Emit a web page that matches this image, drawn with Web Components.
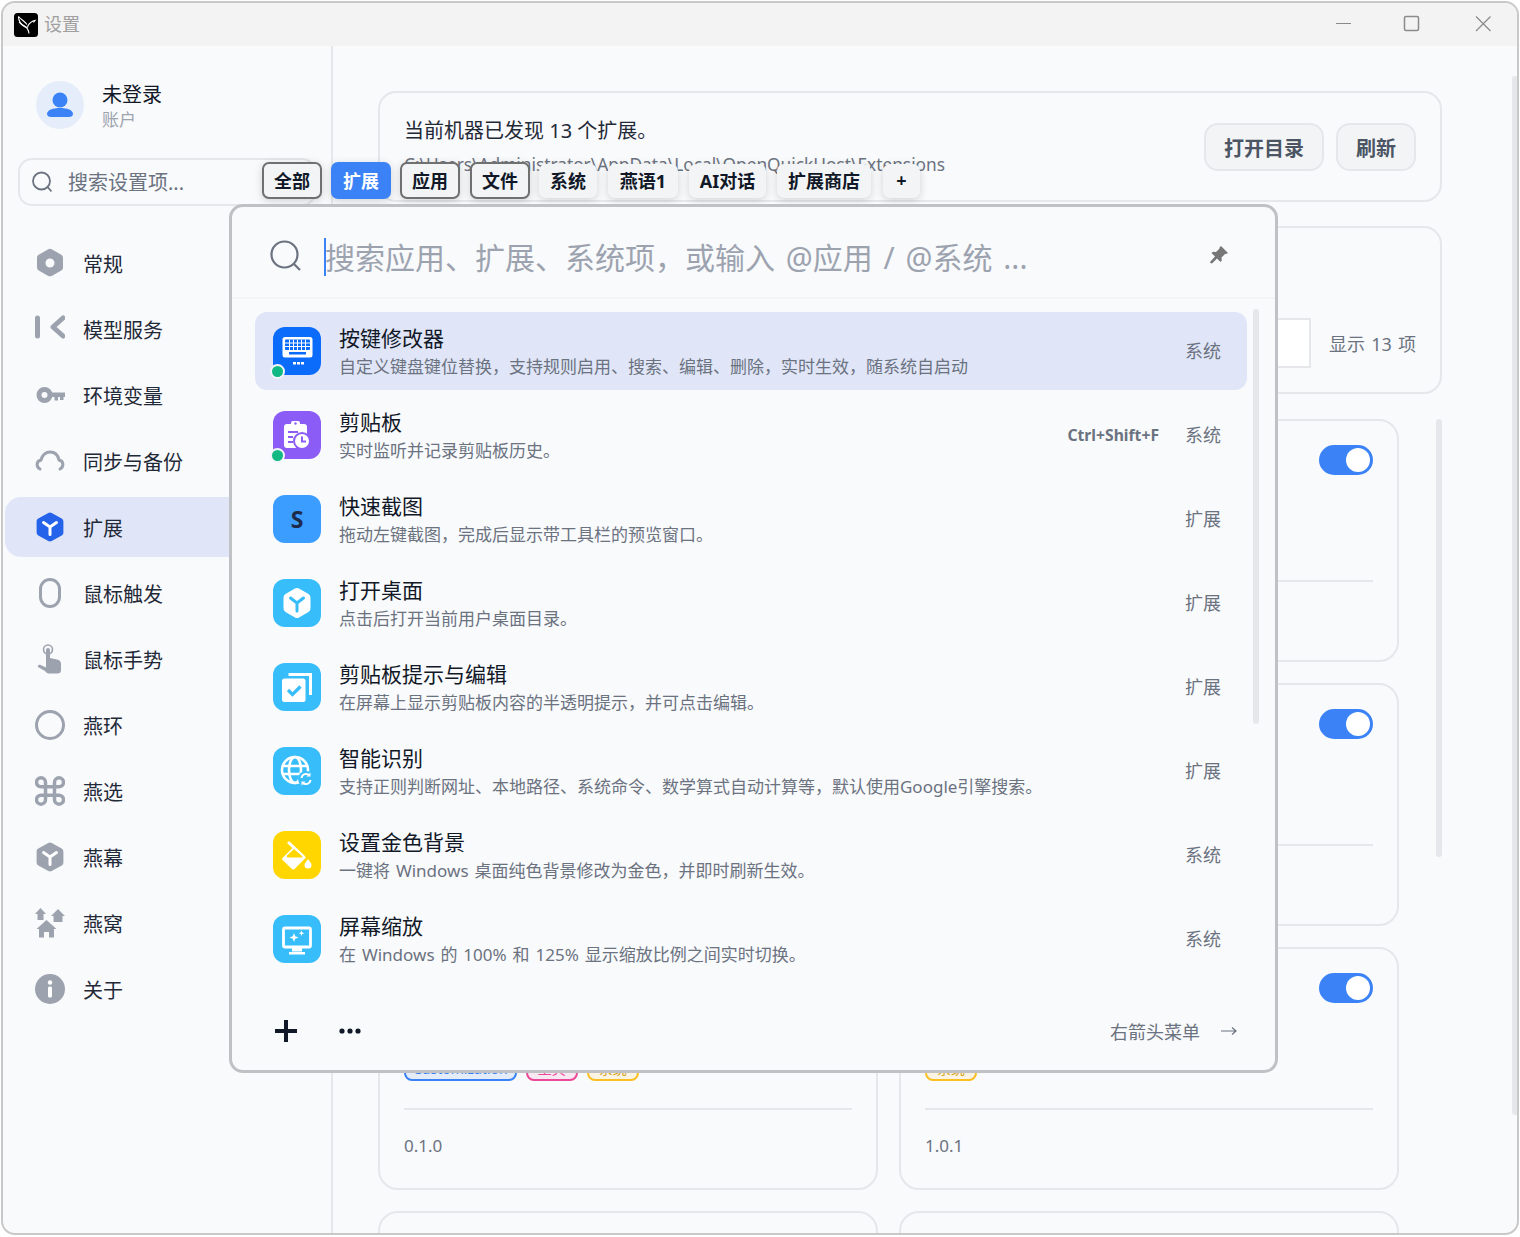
<!DOCTYPE html>
<html lang="zh-CN">
<head>
<meta charset="utf-8">
<title>设置</title>
<style>
  html, body { margin: 0; background: #fff; }
  body { padding: 1px; font-family: "Noto Sans", "Noto Sans CJK SC", sans-serif; color: #1f2937; }
</style>
</head>
<body>
<app-window>
  <title-bar slot="top"></title-bar>
  <side-nav slot="side">
    <nav-item label="常规"><svg viewBox="0 0 30 30"><path fill="#9ca3af" fill-rule="evenodd" d="M13.3 1.2a3.5 3.5 0 0 1 3.4 0l9.6 5.5a3.4 3.4 0 0 1 1.7 3v9.8c0 1.200-.6 2.400-1.700 3l-9.600 5.400a3.500 3.500 0 0 1-3.400 0l-9.600-5.400a3.400 3.400 0 0 1-1.700-3V9.700c0-1.200.6-2.400 1.700-3zM15 10.500a4.500 4.500 0 1 0 0 9 4.500 4.500 0 0 0 0-9z"/></svg></nav-item>
    <nav-item label="模型服务"><svg viewBox="0 0 30 30"><path fill="none" stroke="#9ca3af" stroke-width="5" stroke-linecap="round" stroke-linejoin="round" d="M2.500 4v18M28 4l-10 9 10 9"/></svg></nav-item>
    <nav-item label="环境变量"><svg viewBox="0 0 30 30"><circle cx="9.500" cy="15" r="5.500" fill="none" stroke="#9ca3af" stroke-width="5"/><path fill="#9ca3af" d="M14 12.500h16v4.500h-1.500v3h-3.500v-3h-2v3.500h-3.500V17H14z"/></svg></nav-item>
    <nav-item label="同步与备份"><svg viewBox="0 0 30 30"><path fill="none" stroke="#9ca3af" stroke-width="3" stroke-linecap="round" d="M5 23C1 21 1 15 6 14c1-5 5-8 9-8 5 0 8 3 9 8 5 1 5 7 1 9"/></svg></nav-item>
    <nav-item label="扩展" active><svg viewBox="0 0 30 30"><path fill="#2563eb" d="M13.300 1a3.500 3.500 0 0 1 3.400 0l10 5.600a3.400 3.400 0 0 1 1.700 3v10.800c0 1.200-.6 2.400-1.700 3L16.700 29a3.500 3.500 0 0 1-3.400 0l-10-5.600a3.400 3.400 0 0 1-1.700-3V9.600c0-1.200.6-2.400 1.700-3z"/><path fill="none" stroke="#fff" stroke-width="3" stroke-linecap="round" d="M8.500 10.500 15 15l6.500-4.500M15 15v7.500"/></svg></nav-item>
    <nav-item label="鼠标触发"><svg viewBox="0 0 30 30"><rect x="5.500" y="1.500" width="19" height="27" rx="9.500" fill="none" stroke="#9ca3af" stroke-width="3"/></svg></nav-item>
    <nav-item label="鼠标手势"><svg viewBox="0 0 30 30"><circle cx="13" cy="5.500" r="4.500" fill="none" stroke="#9ca3af" stroke-width="1.600"/><path fill="#9ca3af" d="M11 6a2 2 0 0 1 4 0v8l7 1.600c2.500.6 4 2 4 4.400v6a3.500 3.500 0 0 1-3.500 3.500H14c-2 0-3-1-4-2.500L3 23c-.8-1.500 1-3 2.600-2L11 23.500z"/></svg></nav-item>
    <nav-item label="燕环"><svg viewBox="0 0 30 30"><circle cx="15" cy="15" r="13.500" fill="none" stroke="#9ca3af" stroke-width="3"/></svg></nav-item>
    <nav-item label="燕选"><svg viewBox="0 0 30 30"><path fill="none" stroke="#9ca3af" stroke-width="3.500" d="M10.500 10.500V6.300a4.500 4.500 0 1 0-4.500 4.500h18a4.500 4.500 0 1 0-4.500-4.500v17.400a4.500 4.500 0 1 0 4.500-4.500H6a4.500 4.500 0 1 0 4.500 4.500V10.500z"/></svg></nav-item>
    <nav-item label="燕幕"><svg viewBox="0 0 30 30"><path fill="#9ca3af" d="M13.300 1a3.500 3.500 0 0 1 3.400 0l10 5.600a3.400 3.400 0 0 1 1.700 3v10.800c0 1.200-.6 2.400-1.700 3L16.700 29a3.500 3.500 0 0 1-3.400 0l-10-5.600a3.400 3.400 0 0 1-1.700-3V9.600c0-1.200.6-2.400 1.700-3z"/><path fill="none" stroke="#fff" stroke-width="3" stroke-linecap="round" d="M8.500 10.500 15 15l6.500-4.500M15 15v7.500"/></svg></nav-item>
    <nav-item label="燕窝"><svg viewBox="0 0 30 30"><path fill="#9ca3af" d="M5.500 0 11 6H8.500v6h-6V6H0zM23 1l7 7h-2.500v6h-9V8H16zM11.500 12l10 9H19v8.500h-5V24H9v5.500H4V21H1.500z"/></svg></nav-item>
    <nav-item label="关于"><svg viewBox="0 0 30 30"><circle cx="15" cy="15" r="15" fill="#9ca3af"/><circle cx="15" cy="8.500" r="2.200" fill="#fff"/><rect x="13" y="12.500" width="4" height="11" rx="1.500" fill="#fff"/></svg></nav-item>
  </side-nav>
  <ext-page slot="main">
    <ext-card></ext-card>
    <ext-card></ext-card>
    <ext-card></ext-card>
    <ext-card></ext-card>
    <ext-card version="0.1.0" tags="blue:Customization,pink:工具,amber:系统"></ext-card>
    <ext-card version="1.0.1" tags="amber:系统"></ext-card>
    <ext-card></ext-card>
    <ext-card></ext-card>
  </ext-page>
  <tab-strip slot="over"></tab-strip>
  <launcher-panel slot="over">
    <launcher-item title="按键修改器" sub="自定义键盘键位替换，支持规则启用、搜索、编辑、删除，实时生效，随系统自启动" tag="系统" color="#0b6bfb" dot selected>
      <svg slot="icon" viewBox="0 0 48 48"><rect x="9.500" y="10" width="30" height="20.500" rx="2.500" fill="#fff"/><g fill="#0b6bfb"><rect x="12" y="12.500" width="25" height="10.500" rx="1"/><rect x="16" y="25" width="17" height="2.500" fill="#0b6bfb"/></g><g stroke="#fff" stroke-width="1"><path d="M16.500 12.500V23M20.500 12.500V23M24.500 12.500V23M28.500 12.500V23M32.500 12.500V23M12 16h25M12 19.500h25"/></g><rect x="20" y="35" width="3" height="2.500" fill="#fff"/><rect x="24" y="35" width="3" height="2.500" fill="#fff"/><rect x="28" y="35" width="3" height="2.500" fill="#fff"/></svg>
    </launcher-item>
    <launcher-item title="剪贴板" sub="实时监听并记录剪贴板历史。" tag="系统" shortcut="Ctrl+Shift+F" color="#8b5cf6" dot>
      <svg slot="icon" viewBox="0 0 48 48"><rect x="11" y="13" width="23" height="24" rx="3" fill="#fff"/><rect x="18" y="10" width="9" height="6" rx="2" fill="#fff"/><circle cx="22.500" cy="12.500" r="1.200" fill="#8b5cf6"/><path d="M15 21h10M15 26h5M15 31h5" stroke="#8b5cf6" stroke-width="2"/><circle cx="29" cy="30" r="9" fill="#8b5cf6"/><circle cx="29" cy="30" r="7" fill="#fff"/><path d="M29 25.500V30.500h4" fill="none" stroke="#8b5cf6" stroke-width="2"/></svg>
    </launcher-item>
    <launcher-item title="快速截图" sub="拖动左键截图，完成后显示带工具栏的预览窗口。" tag="扩展" color="#3b9dff" letter="S"></launcher-item>
    <launcher-item title="打开桌面" sub="点击后打开当前用户桌面目录。" tag="扩展" color="#38bdfb">
      <svg slot="icon" viewBox="0 0 48 48"><path fill="#fff" d="M22 9.600a4 4 0 0 1 4 0l9.500 5.500a4 4 0 0 1 2 3.400v11a4 4 0 0 1-2 3.400L26 38.400a4 4 0 0 1-4 0l-9.500-5.500a4 4 0 0 1-2-3.400v-11a4 4 0 0 1 2-3.400z"/><path fill="none" stroke="#38bdfb" stroke-width="3" stroke-linecap="round" d="M17.500 19 24 24l6.500-5M24 24v8"/></svg>
    </launcher-item>
    <launcher-item title="剪贴板提示与编辑" sub="在屏幕上显示剪贴板内容的半透明提示，并可点击编辑。" tag="扩展" color="#38bdfb">
      <svg slot="icon" viewBox="0 0 48 48"><path d="M15.500 11.500H37.500V32" fill="none" stroke="#fff" stroke-width="3"/><rect x="9" y="15.500" width="23.500" height="23.500" rx="2.500" fill="#fff"/><path d="M15 27l4.500 4.500 8-8" fill="none" stroke="#38bdfb" stroke-width="3.200"/></svg>
    </launcher-item>
    <launcher-item title="智能识别" sub="支持正则判断网址、本地路径、系统命令、数学算式自动计算等，默认使用Google引擎搜索。" tag="扩展" color="#38bdfb">
      <svg slot="icon" viewBox="0 0 48 48"><g fill="none" stroke="#fff" stroke-width="2.600"><circle cx="22" cy="23" r="13"/><ellipse cx="22" cy="23" rx="6" ry="13"/><path d="M9.500 19h25M9.500 27h25"/></g><circle cx="33" cy="32" r="8" fill="#38bdfb"/><g fill="none" stroke="#fff" stroke-width="2"><path d="M28.500 31a4.600 4.600 0 0 1 8-2.500M37.500 33a4.600 4.600 0 0 1-8 2.500"/></g><path fill="#fff" d="M37.500 25.500v4h-4zM28.500 38.500v-4h4z"/></svg>
    </launcher-item>
    <launcher-item title="设置金色背景" sub="一键将 Windows 桌面纯色背景修改为金色，并即时刷新生效。" tag="系统" color="#ffd600">
      <svg slot="icon" viewBox="0 0 48 48"><path d="M15 11l16 15" stroke="#fff" stroke-width="3" fill="none"/><path d="M21 15.500 9.500 27a1.500 1.500 0 0 0 0 2L19 38a2 2 0 0 0 2.500 0L33 26.500z" fill="#fff"/><path d="M14 24.500 21 18l8.500 7.500-.5 1H14z" fill="#ffd600"/><path d="M35 28c2 2.800 3.500 4.500 3.500 6a3.500 3.500 0 0 1-7 0c0-1.500 1.500-3.200 3.500-6z" fill="#fff"/></svg>
    </launcher-item>
    <launcher-item title="屏幕缩放" sub="在 Windows 的 100% 和 125% 显示缩放比例之间实时切换。" tag="系统" color="#38bdfb">
      <svg slot="icon" viewBox="0 0 48 48"><rect x="10.500" y="13" width="27" height="19" rx="1.500" fill="none" stroke="#fff" stroke-width="2.800"/><path d="M19 33h10v3.500h-10zM16 37h16v2.500H16z" fill="#fff"/><path fill="#fff" d="M21 18l1.200 3.300 3.300 1.200-3.300 1.200L21 27l-1.200-3.300-3.300-1.200 3.300-1.200zM28.500 15.500l.8 2 2 .8-2 .8-.8 2-.8-2-2-.8 2-.8z"/></svg>
    </launcher-item>
  </launcher-panel>
</app-window>

<script>
class AppWindow extends HTMLElement {
  constructor() {
    super();
    this.attachShadow({ mode: 'open' });
    this.shadowRoot.innerHTML = `
      <style>
        :host {
          display: flex;
          flex-direction: column;
          position: relative;
          box-sizing: border-box;
          width: 1518px;
          height: 1234px;
          border: 2px solid #c8c8c8;
          border-radius: 14px;
          background: #f9fafc;
          overflow: hidden;
        }
        .body { display: flex; flex: 1; min-height: 0; }
      </style>
      <slot name="top"></slot>
      <div class="body">
        <slot name="side"></slot>
        <slot name="main"></slot>
      </div>
      <slot name="over"></slot>
    `;
  }
}

class TitleBar extends HTMLElement {
  constructor() {
    super();
    this.attachShadow({ mode: 'open' });
    this.shadowRoot.innerHTML = `
      <style>
        :host {
          display: flex;
          align-items: center;
          flex: none;
          height: 43px;
          padding-left: 11px;
          background: #f3f3f3;
        }
        .logo { width: 24px; height: 24px; display: block; }
        .name { margin: -4px 0 0 6px; font-size: 18px; color: #a0a0a0; }
        .ctrls { margin-left: auto; display: flex; }
        .ctrls svg { display: block; width: 71px; height: 43px; }
      </style>
      <svg class="logo" viewBox="0 0 24 24">
        <rect width="24" height="24" rx="3.500" fill="#000"/>
        <g fill="none" stroke="#fff" stroke-width="1.100">
          <path d="M4.500 3.500c0 4.500 2 7.500 6 9.500 3 1.500 4 4 4.500 7.500"/>
          <path d="M4.500 3.500c3 3.500 6 4.500 8.500 8"/>
          <path d="M5 9c2.500 3 5 5 8.500 6"/>
          <path d="M13.500 14.500c.5-3 2.500-5 5.500-6.500l2-.5-1.500 2"/>
        </g>
      </svg>
      <span class="name">设置</span>
      <div class="ctrls">
        <svg viewBox="0 0 71 43"><path d="M30 20.500h15" stroke="#8a8a8a" stroke-width="1.200"/></svg>
        <svg viewBox="0 0 71 43"><rect x="27.500" y="13.500" width="14" height="14" rx="1.500" fill="none" stroke="#8a8a8a" stroke-width="1.500"/></svg>
        <svg viewBox="0 0 71 43" style="margin-right:-2px"><path d="M28 13.500l14.500 14.500M42.500 13.500 28 28" stroke="#8a8a8a" stroke-width="1.200"/></svg>
      </div>
    `;
  }
}

class SideNav extends HTMLElement {
  constructor() {
    super();
    this.attachShadow({ mode: 'open' });
    this.shadowRoot.innerHTML = `
      <style>
        :host {
          display: flex;
          flex-direction: column;
          flex: none;
          box-sizing: border-box;
          width: 330px;
          border-right: 2px solid #e5e7eb;
        }
        .user { display: flex; align-items: center; gap: 18px; padding: 35px 0 0 33px; }
        .avatar {
          width: 48px; height: 48px; border-radius: 50%;
          background: #e5edfb;
          display: flex; align-items: center; justify-content: center;
        }
        .who { display: flex; flex-direction: column; }
        .who b { font-weight: 400; font-size: 20px; line-height: 28px; color: #111827; }
        .who small { font-size: 17px; margin-top: 2px; line-height: 18px; color: #9ca3af; }
        .search {
          display: flex; align-items: center; gap: 16px;
          box-sizing: border-box;
          height: 48px;
          margin: 29px 15px 0 15px;
          padding-left: 12px;
          border: 2px solid #e5e7eb;
          border-radius: 14px;
          font-size: 20px;
          color: #6b7280;
        }
        .search span { margin-top: -2px; }
        .list { display: flex; flex-direction: column; gap: 6px; margin-top: 27px; padding: 0 10px 0 2px; }
      </style>
      <div class="user">
        <span class="avatar">
          <svg width="28" height="28" viewBox="0 0 28 28"><circle cx="14" cy="9" r="7.500" fill="#3b82f6"/><path d="M1 23c0-4 6-6 13-6s13 2 13 6c0 2-2 3-4 3H5c-2 0-4-1-4-3z" fill="#3b82f6"/></svg>
        </span>
        <span class="who"><b>未登录</b><small>账户</small></span>
      </div>
      <div class="search">
        <svg width="20" height="22" viewBox="0 0 20 22"><circle cx="9.500" cy="10" r="8.500" fill="none" stroke="#6b7280" stroke-width="1.800"/><path d="M15.500 16l4 4.500" stroke="#6b7280" stroke-width="1.800"/></svg>
        <span>搜索设置项...</span>
      </div>
      <div class="list"><slot></slot></div>
    `;
  }
}

class NavItem extends HTMLElement {
  constructor() {
    super();
    this.attachShadow({ mode: 'open' });
    this.shadowRoot.innerHTML = `
      <style>
        :host {
          display: flex;
          align-items: center;
          gap: 18px;
          height: 60px;
          padding-left: 30px;
          border-radius: 16px;
          font-size: 20px;
          color: #1f2937;
        }
        :host([active]) { background: #e0e6f8; }
        ::slotted(svg) { width: 30px; height: 30px; flex: none; display: block; }
      </style>
      <slot></slot>
      <span>${this.getAttribute('label')}</span>
    `;
  }
}

class ExtCard extends HTMLElement {
  constructor() {
    super();
    this.attachShadow({ mode: 'open' });
    const tags = (this.getAttribute('tags') || '').split(',').filter(Boolean)
      .map(t => `<span class="tag ${t.split(':')[0]}">${t.split(':')[1]}</span>`).join('');
    this.shadowRoot.innerHTML = `
      <style>
        :host {
          display: flex;
          flex-direction: column;
          box-sizing: border-box;
          height: 243px;
          padding: 24px 24px 0 24px;
          border: 2px solid #e5e7eb;
          border-radius: 20px;
        }
        .switch {
          align-self: flex-end;
          flex: none;
          box-sizing: border-box;
          width: 54px; height: 30px;
          padding: 3px;
          border-radius: 15px;
          background: #3b82f6;
          display: flex; justify-content: flex-end;
        }
        .switch i { width: 24px; height: 24px; border-radius: 50%; background: #fff; }
        .tags { display: flex; gap: 9px; margin-top: 54px; height: 24px; flex: none; }
        .tag {
          box-sizing: border-box;
          padding: 0 10px;
          border: 2px solid;
          border-radius: 8px;
          font-size: 14px;
          line-height: 20px;
        }
        .blue { padding: 0 7px; background: #e4ecf9; border-color: #3b82f6; color: #3b82f6; }
        .pink { background: #f8e8f2; border-color: #ec4899; color: #ec4899; }
        .amber { background: #fbf4e2; border-color: #fbbf24; color: #d9a21b; }
        hr { flex: none; width: 100%; margin: 27px 0 0; border: 0; border-top: 2px solid #e5e7eb; }
        .ver { margin-top: 23px; font-size: 17px; line-height: 26px; color: #6b7280; }
      </style>
      <div class="switch"><i></i></div>
      <div class="tags">${tags}</div>
      <hr>
      <div class="ver">${this.getAttribute('version') || ''}</div>
    `;
  }
}

class ExtPage extends HTMLElement {
  constructor() {
    super();
    this.attachShadow({ mode: 'open' });
    this.shadowRoot.innerHTML = `
      <style>
        :host {
          display: flex;
          flex-direction: column;
          flex: 1;
          min-width: 0;
          position: relative;
          box-sizing: border-box;
          padding: 45px 0 0 45px;
          overflow: hidden;
        }
        .box {
          box-sizing: border-box;
          width: 1064px;
          flex: none;
          border: 2px solid #e5e7eb;
          border-radius: 18px;
        }
        .head {
          height: 111px;
          display: flex;
          align-items: flex-start;
          padding: 0 24px;
        }
        .head .txt { flex: 1; padding-top: 23px; }
        .head p { margin: 0; font-size: 20px; line-height: 30px; color: #1f2937; }
        .head .path { margin-top: 6px; font-size: 17.3px; line-height: 26px; color: #6b7280; }
        .head .btns { display: flex; gap: 12px; padding-top: 30px; }
        .btn {
          box-sizing: border-box;
          height: 48px;
          padding: 0 18px;
          display: flex; align-items: center;
          background: #f3f4f6;
          border: 2px solid #e5e7eb;
          border-radius: 14px;
          font-size: 20px;
          font-weight: 700;
          color: #4b5563;
        }
        .filter {
          margin-top: 24px;
          height: 168px;
          display: flex;
          align-items: flex-end;
          gap: 18px;
          padding: 0 24px 24px;
        }
        .field { flex: 1; height: 50px; box-sizing: border-box; background: #fff; border: 2px solid #e5e7eb; }
        .count { font-size: 18px; word-spacing: 1.500px; line-height: 52px; margin-bottom: -2px; color: #6b7280; }
        .grid {
          display: grid;
          grid-template-columns: 500px 500px;
          grid-auto-rows: 243px;
          column-gap: 21px;
          row-gap: 21px;
          margin-top: 25px;
        }
        .bar { position: absolute; background: #e5e7eb; border-radius: 3px; width: 6px; }
        .bar.inner { left: 1103px; top: 373px; height: 438px; }
        .bar.outer { left: 1179px; top: 30px; height: 1039px; }
      </style>
      <div class="box head">
        <div class="txt">
          <p>当前机器已发现 13 个扩展。</p>
          <p class="path">C:\\Users\\Administrator\\AppData\\Local\\OpenQuickHost\\Extensions</p>
        </div>
        <div class="btns"><span class="btn">打开目录</span><span class="btn">刷新</span></div>
      </div>
      <div class="box filter"><div class="field"></div><span class="count">显示 13 项</span></div>
      <div class="grid"><slot></slot></div>
      <div class="bar inner"></div>
      <div class="bar outer"></div>
    `;
  }
}

class TabStrip extends HTMLElement {
  constructor() {
    super();
    this.attachShadow({ mode: 'open' });
    const tabs = [
      ['全部', 'on', 60, 0], ['扩展', 'cur', 60, 0], ['应用', 'on', 60, 0], ['文件', 'on', 60, 1],
      ['系统', '', 58, 0], ['燕语1', '', 70, 2], ['AI对话', '', 77, 2], ['扩展商店', '', 94, 2], ['+', '', 37, 3]
    ];
    this.shadowRoot.innerHTML = `
      <style>
        :host {
          position: absolute;
          left: 259px;
          top: 159px;
          display: flex;
          align-items: center;
          gap: 9px;
          height: 37px;
        }
        span {
          box-sizing: border-box;
          display: flex; align-items: center; justify-content: center;
          height: 34px;
          padding-bottom: 2px;
          border-radius: 7px;
          background: #f3f4f6;
          font-size: 18px;
          font-weight: 700;
          color: #111827;
          box-shadow: 0 2px 8px rgba(0,0,0,.16);
        }
        .on, .cur { height: 37px; }
        .on { border: 2px solid #707070; }
        .cur { background: #3b82f6; color: #fff; }
      </style>
      ${tabs.map(t => `<span class="${t[1]}" style="width:${t[2]}px;margin-left:${t[3]}px">${t[0]}</span>`).join('')}
    `;
  }
}

class LauncherPanel extends HTMLElement {
  constructor() {
    super();
    this.attachShadow({ mode: 'open' });
    this.shadowRoot.innerHTML = `
      <style>
        :host {
          position: absolute;
          left: 226px;
          top: 201px;
          display: flex;
          flex-direction: column;
          box-sizing: border-box;
          width: 1049px;
          height: 869px;
          background: #f9fafc;
          border: 3px solid #bfc1c4;
          border-radius: 14px;
          overflow: hidden;
        }
        .top {
          flex: none;
          display: flex;
          align-items: center;
          box-sizing: border-box;
          height: 92px;
          padding: 10px 46px 0 38px;
          border-bottom: 2px solid #f3f4f6;
        }
        .top .ico { display: block; margin-top: -2px; flex: none; }
        .caret { flex: none; width: 2px; height: 38px; margin-left: 22px; background: #3b82f6; }
        .hint { font-size: 30px; word-spacing: 3px; color: #9ca3af; margin: -2px 0 0 -1px; flex: 1; white-space: nowrap; }
        .pin { margin-top: -4px; flex: none; }
        .list {
          flex: 1;
          position: relative;
          display: flex;
          flex-direction: column;
          gap: 6px;
          padding: 13px 0 0 23px;
          overflow: hidden;
        }
        .bar { position: absolute; left: 1021px; top: 10px; height: 415px; width: 6px; border-radius: 3px; background: #e5e7eb; }
        .foot {
          flex: none;
          display: flex;
          align-items: center;
          box-sizing: border-box;
          height: 78px;
          padding: 0 38px 0 43px;
          font-size: 18px;
          color: #6b7280;
        }
        .foot .dots { margin-left: 42px; }
        .foot .arrow { margin-left: 21px; }
        .foot span { margin-left: auto; }
      </style>
      <div class="top">
        <svg class="ico" width="32" height="32" viewBox="0 0 32 32"><circle cx="14.500" cy="14.500" r="13" fill="none" stroke="#6b7280" stroke-width="2.200"/><path d="M24 24l6 6" stroke="#6b7280" stroke-width="2.200"/></svg>
        <div class="caret"></div>
        <div class="hint">搜索应用、扩展、系统项，或输入 @应用 / @系统 ...</div>
        <svg class="pin" width="20" height="20" viewBox="0 0 20 20"><path fill="#777" d="M12 1l7 7-2 1-1 0-3.500 3.500.3 3-1.300 1.500-3.500-3.500L3 18.500l-1.500-.5-.5-1 5-5.500L2.500 8 4 6.700l3 .3L10.500 3.500V2.500z"/></svg>
      </div>
      <div class="list"><slot></slot><div class="bar"></div></div>
      <div class="foot">
        <svg width="22" height="22" viewBox="0 0 22 22"><path d="M11 0v22M0 11h22" stroke="#111827" stroke-width="4"/></svg>
        <svg class="dots" width="22" height="6" viewBox="0 0 22 6"><circle cx="3" cy="3" r="2.600" fill="#111827"/><circle cx="11" cy="3" r="2.600" fill="#111827"/><circle cx="19" cy="3" r="2.600" fill="#111827"/></svg>
        <span>右箭头菜单</span>
        <svg class="arrow" width="16" height="10" viewBox="0 0 16 10"><path d="M0 5h15M11 1.500 15 5l-4 3.500" fill="none" stroke="#6b7280" stroke-width="1.200"/></svg>
      </div>
    `;
  }
}

class LauncherItem extends HTMLElement {
  constructor() {
    super();
    this.attachShadow({ mode: 'open' });
    const shortcut = this.getAttribute('shortcut');
    const letter = this.getAttribute('letter');
    this.shadowRoot.innerHTML = `
      <style>
        :host {
          display: flex;
          align-items: center;
          flex: none;
          box-sizing: border-box;
          width: 992px;
          height: 78px;
          padding: 0 26px 0 18px;
          border-radius: 12px;
        }
        :host([selected]) { background: #e0e6f8; }
        .icon {
          position: relative;
          flex: none;
          width: 48px; height: 48px;
          border-radius: 12px;
          background: ${this.getAttribute('color')};
          display: flex; align-items: center; justify-content: center;
          font-size: 23px; font-weight: 700; color: #1e2a4a;
        }
        ::slotted(svg) { width: 48px; height: 48px; display: block; }
        .dot {
          position: absolute; left: -3px; bottom: -4px;
          width: 11px; height: 11px;
          border: 2px solid #f1f5fb;
          border-radius: 50%;
          background: #10b981;
        }
        .text { flex: 1; min-width: 0; margin-left: 18px; padding-top: 5px; display: flex; flex-direction: column; }
        .title { font-size: 21px; line-height: 22px; margin-bottom: 4px; color: #111827; }
        .sub { font-size: 17px; word-spacing: 1.500px; line-height: 28px; color: #6b7280; white-space: nowrap; }
        .key { font-size: 15.700px; font-weight: 700; color: #6b7280; margin-right: 26px; }
        .tag { font-size: 18px; color: #6b7280; margin-top: -2px; }
      </style>
      <div class="icon"><slot name="icon">${letter || ''}</slot>${this.hasAttribute('dot') ? '<i class="dot"></i>' : ''}</div>
      <div class="text">
        <span class="title">${this.getAttribute('title')}</span>
        <span class="sub">${this.getAttribute('sub')}</span>
      </div>
      ${shortcut ? `<span class="key">${shortcut}</span>` : ''}
      <span class="tag">${this.getAttribute('tag')}</span>
    `;
  }
}

customElements.define('app-window', AppWindow);
customElements.define('title-bar', TitleBar);
customElements.define('side-nav', SideNav);
customElements.define('nav-item', NavItem);
customElements.define('ext-card', ExtCard);
customElements.define('ext-page', ExtPage);
customElements.define('tab-strip', TabStrip);
customElements.define('launcher-panel', LauncherPanel);
customElements.define('launcher-item', LauncherItem);
</script>
</body>
</html>
